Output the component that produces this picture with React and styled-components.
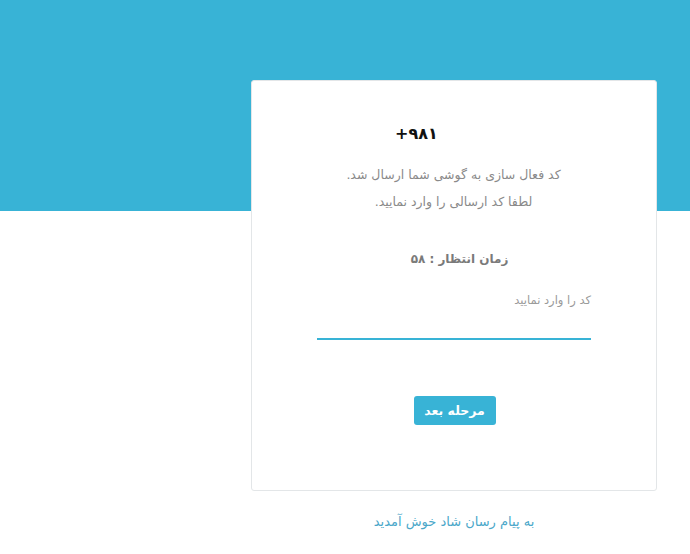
import React from "react";
import styled, { createGlobalStyle } from "styled-components";

const Global = createGlobalStyle`
  html, body { margin: 0; padding: 0; background: #fff; }
  body { font-family: "DejaVu Sans", "Noto Sans", sans-serif; }
  * { box-sizing: border-box; }
`;

const Page = styled.div`
  position: relative;
  width: 690px;
  min-height: 554px;
  background: linear-gradient(to bottom, #38b3d6 0, #38b3d6 211px, #fff 211px);
  padding-top: 80px;
  direction: rtl;
`;

const Column = styled.div`
  width: 406px;
  margin-right: 33px;
  display: flex;
  flex-direction: column;
  align-items: stretch;
`;

const Card = styled.div`
  background: #fff;
  border: 1px solid #e3e6e8;
  border-radius: 3px;
  height: 411px;
  padding: 43px 65px 0 64px;
  display: flex;
  flex-direction: column;
`;

const Phone = styled.div`
  direction: ltr;
  font-weight: bold;
  font-size: 16px;
  color: #111;
  text-align: left;
  padding-left: 79px;
  line-height: 20px;
`;

const Info = styled.p`
  margin: ${(p) => p.$top}px 0 0;
  font-size: 12.5px;
  color: #8a8a8a;
  text-align: center;
  line-height: 20px;
`;

const Timer = styled.div`
  margin-top: 37px;
  font-size: 12px;
  font-weight: bold;
  color: #7a7a7a;
  text-align: center;
  padding-left: 12px;
  line-height: 20px;
`;

const Label = styled.label`
  display: block;
  margin-top: 23px;
  font-size: 11.5px;
  color: #9a9a9a;
  line-height: 16px;
`;

const Input = styled.input`
  display: block;
  width: 274px;
  margin-top: 5px;
  height: 27px;
  border: none;
  border-bottom: 2px solid #38b3d6;
  outline: none;
  background: transparent;
  font-family: inherit;
`;

const ButtonRow = styled.div`
  margin-top: 56px;
  display: flex;
  justify-content: center;
  padding-left: 2px;
`;

const Button = styled.button`
  width: 82px;
  height: 29px;
  border: none;
  border-radius: 3px;
  background: #38b3d6;
  color: #fff;
  font-family: inherit;
  font-weight: bold;
  font-size: 12.5px;
  cursor: pointer;
`;

const Footer = styled.div`
  margin-top: 21px;
  text-align: center;
  color: #4aa7c9;
  font-size: 13px;
  line-height: 20px;
`;

export default function App() {
  return (
    <>
      <Global />
      <Page>
        <Column>
          <Card>
            <Phone>+۹۸۱</Phone>
            <Info $top={21}>کد فعال سازی به گوشی شما ارسال شد.</Info>
            <Info $top={7}>لطفا کد ارسالی را وارد نمایید.</Info>
            <Timer>زمان انتظار : ۵۸</Timer>
            <Label>کد را وارد نمایید</Label>
            <Input type="text" />
            <ButtonRow>
              <Button>مرحله بعد</Button>
            </ButtonRow>
          </Card>
          <Footer>به پیام رسان شاد خوش آمدید</Footer>
        </Column>
      </Page>
    </>
  );
}
